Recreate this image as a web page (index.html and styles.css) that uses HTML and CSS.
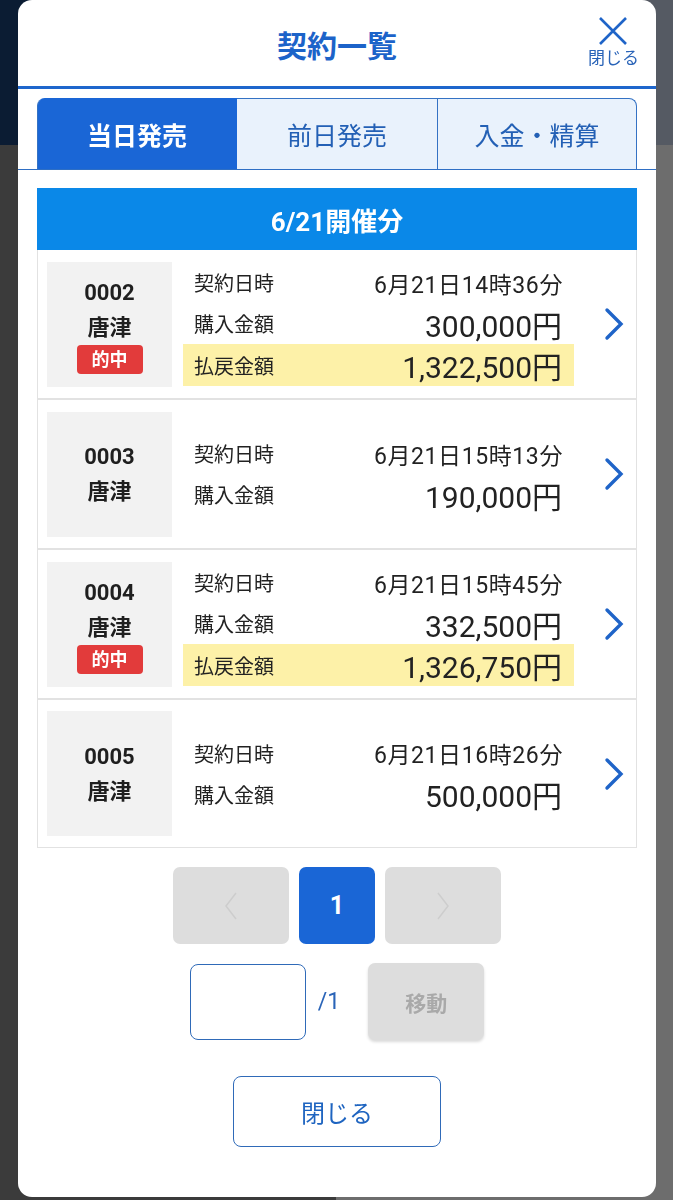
FILE: index.html
```html
<!DOCTYPE html>
<html lang="ja">
    <head>
        <meta charset="UTF-8">
        <meta name="viewport" content="width=device-width, initial-scale=1.0">
        <title>契約一覧</title>
        <link rel="stylesheet" href="styles.css">
    </head>
    <body>
        <div class="page">
            <div class="page-head"></div>
            <div class="page-body"></div>
        </div>

        <div class="modal">
            <header class="modal-head">
                <h1>契約一覧</h1>
                <button class="close-x">
                    <svg width="30" height="28" viewBox="0 0 30 28">
                        <path d="M2 1 L28 27 M28 1 L2 27" stroke="#1f64c8" stroke-width="2.6" fill="none"/>
                    </svg>
                    <span>閉じる</span>
                </button>
            </header>

            <nav class="tabs">
                <ul>
                    <li class="active">当日発売</li>
                    <li>前日発売</li>
                    <li>入金・精算</li>
                </ul>
            </nav>

            <section class="content">
                <h2 class="day">6/21開催分</h2>

                <ul class="contracts">
                    <li class="contract">
                        <div class="race">
                            <b>0002</b>
                            <b>唐津</b>
                            <span class="hit">的中</span>
                        </div>
                        <dl class="info">
                            <div class="row"><dt>契約日時</dt><dd class="date">6月21日14時36分</dd></div>
                            <div class="row"><dt>購入金額</dt><dd class="amount">300,000円</dd></div>
                            <div class="row payout"><dt>払戻金額</dt><dd class="amount">1,322,500円</dd></div>
                        </dl>
                        <svg class="chev" width="22" height="34" viewBox="0 0 22 34">
                            <path d="M4 3 L18 17 L4 31" stroke="#1f64c8" stroke-width="3.4" fill="none" stroke-linecap="round"/>
                        </svg>
                    </li>

                    <li class="contract">
                        <div class="race">
                            <b>0003</b>
                            <b>唐津</b>
                        </div>
                        <dl class="info">
                            <div class="row"><dt>契約日時</dt><dd class="date">6月21日15時13分</dd></div>
                            <div class="row"><dt>購入金額</dt><dd class="amount">190,000円</dd></div>
                        </dl>
                        <svg class="chev" width="22" height="34" viewBox="0 0 22 34">
                            <path d="M4 3 L18 17 L4 31" stroke="#1f64c8" stroke-width="3.4" fill="none" stroke-linecap="round"/>
                        </svg>
                    </li>

                    <li class="contract">
                        <div class="race">
                            <b>0004</b>
                            <b>唐津</b>
                            <span class="hit">的中</span>
                        </div>
                        <dl class="info">
                            <div class="row"><dt>契約日時</dt><dd class="date">6月21日15時45分</dd></div>
                            <div class="row"><dt>購入金額</dt><dd class="amount">332,500円</dd></div>
                            <div class="row payout"><dt>払戻金額</dt><dd class="amount">1,326,750円</dd></div>
                        </dl>
                        <svg class="chev" width="22" height="34" viewBox="0 0 22 34">
                            <path d="M4 3 L18 17 L4 31" stroke="#1f64c8" stroke-width="3.4" fill="none" stroke-linecap="round"/>
                        </svg>
                    </li>

                    <li class="contract">
                        <div class="race">
                            <b>0005</b>
                            <b>唐津</b>
                        </div>
                        <dl class="info">
                            <div class="row"><dt>契約日時</dt><dd class="date">6月21日16時26分</dd></div>
                            <div class="row"><dt>購入金額</dt><dd class="amount">500,000円</dd></div>
                        </dl>
                        <svg class="chev" width="22" height="34" viewBox="0 0 22 34">
                            <path d="M4 3 L18 17 L4 31" stroke="#1f64c8" stroke-width="3.4" fill="none" stroke-linecap="round"/>
                        </svg>
                    </li>
                </ul>

                <div class="pager">
                    <button class="page-btn wide" disabled>
                        <svg width="16" height="30" viewBox="0 0 16 30"><path d="M13 2 L3 15 L13 28" stroke="#cdcdcd" stroke-width="1.5" fill="none"/></svg>
                    </button>
                    <button class="page-btn current">1</button>
                    <button class="page-btn wide" disabled>
                        <svg width="16" height="30" viewBox="0 0 16 30"><path d="M3 2 L13 15 L3 28" stroke="#cdcdcd" stroke-width="1.5" fill="none"/></svg>
                    </button>
                </div>

                <form class="jump">
                    <input type="text">
                    <span class="total">/1</span>
                    <button class="move" disabled>移動</button>
                </form>

                <button class="close-btn">閉じる</button>
            </section>
        </div>
    </body>
</html>
```

FILE: styles.css
```css
:root{
    --blue: #1c63c9;
    --blue-active: #1a66d6;
    --blue-bar: #0a88e8;
    --tab-bg: #e9f2fc;
    --line: #e2e2e2;
    --grey-box: #f2f2f2;
    --btn-grey: #dddddd;
    --text: #222;
}
body{
    margin: 0;
    font-family: Roboto, "Noto Sans CJK JP", sans-serif;
    color: var(--text);
    height: 1200px;
    overflow: hidden;
}
ul, dl, dd, h1, h2{
    margin: 0;
    padding: 0;
    list-style: none;
}
button{
    font-family: inherit;
}

/* page under the overlay */
.page{
    height: 1200px;
    display: flex;
    flex-direction: column;
}
.page-head{
    height: 145px;
    background: linear-gradient(to right, #0b1c33 50%, #555a63 50%);
}
.page-body{
    flex-grow: 1;
    background: linear-gradient(to right, #3b3b3b 50%, #6d6d6d 50%);
}

.modal{
    position: fixed;
    top: 0;
    left: 18px;
    width: 638px;
    height: 1197px;
    background: #fff;
    border-radius: 14px;
    display: flex;
    flex-direction: column;
}

.modal-head{
    height: 86px;
    border-bottom: 3px solid #1e66cc;
    display: grid;
    grid-template-columns: 1fr auto 1fr;
    align-items: center;

    h1{
        grid-column: 2;
        font-size: 30px;
        font-weight: 700;
        color: var(--blue);
        margin-top: 2px;
    }
}
.close-x{
    grid-column: 3;
    justify-self: end;
    margin-right: 17px;
    border: none;
    background: none;
    padding: 0;
    display: flex;
    flex-direction: column;
    align-items: center;
    gap: 2px;
    margin-top: 0;

    svg{
        margin-left: -2px;
    }
    span{
        font-size: 17px;
        color: #2a64b8;
        line-height: 22px;
    }
}

.tabs{
    padding: 9px 19px 0;
    border-bottom: 1px solid #2f6fc4;

    ul{
        display: grid;
        grid-template-columns: 200px 201px 199px;
    }
    li{
        height: 71px;
        display: flex;
        align-items: center;
        justify-content: center;
        font-size: 25px;
        color: #2360b5;
        background: var(--tab-bg);
        border: 1px solid #3472c4;
        border-bottom: none;
        border-left: none;
        box-sizing: border-box;
    }
    li:first-child{
        border-top-left-radius: 8px;
        border-left: 1px solid #3472c4;
    }
    li:last-child{
        border-top-right-radius: 8px;
    }
    .active{
        background: var(--blue-active);
        border-color: var(--blue-active);
        color: #fff;
        font-weight: 700;
    }
}

.content{
    padding: 18px 19px 0;
    display: flex;
    flex-direction: column;
    align-items: center;
}
.day{
    align-self: stretch;
    height: 62px;
    background: var(--blue-bar);
    color: #fff;
    font-size: 26px;
    font-weight: 700;
    display: flex;
    align-items: center;
    justify-content: center;
}

.contracts{
    align-self: stretch;
    border: 1px solid var(--line);
    border-top: none;
}
.contract{
    display: grid;
    grid-template-columns: 125px 391px 1fr;
    gap: 11px;
    align-items: center;
    padding: 11px 0 11px 9px;
    border-bottom: 2px solid var(--line);
    height: 126px;

    &:last-child{
        border-bottom: none;
        height: 125px;
    }
}
.race{
    height: 125px;
    background: var(--grey-box);
    display: flex;
    flex-direction: column;
    align-items: center;
    justify-content: center;
    font-size: 22px;
    line-height: 35px;

    b{
        font-weight: 700;
        color: #1f1f1f;
    }
}
.hit{
    background: #e23b3b;
    color: #fff;
    font-weight: 700;
    font-size: 18px;
    line-height: 29px;
    padding: 0 15px;
    border-radius: 4px;
}
.info{
    display: flex;
    flex-direction: column;
}
.row{
    height: 41px;
    display: flex;
    align-items: center;
    justify-content: space-between;
    padding: 0 12px 0 11px;

    dt{
        font-size: 20px;
    }
    .date{
        font-size: 23px;
        letter-spacing: 0.6px;
        margin-right: -1px;
    }
    .amount{
        font-size: 30px;
    }
    &.payout{
        height: 42px;
        background: #fdf1a8;
    }
}
.chev{
    margin-left: 18px;
}

.pager{
    display: flex;
    gap: 10px;
    margin-top: 19px;
}
.page-btn{
    width: 76px;
    height: 77px;
    border: none;
    border-radius: 7px;
    background: var(--btn-grey);
    display: flex;
    align-items: center;
    justify-content: center;
    padding: 0;

    &.wide{
        width: 116px;
    }
    &.current{
        background: var(--blue-active);
        color: #fff;
        font-size: 25px;
        font-weight: 700;
    }
}

.jump{
    display: flex;
    align-items: center;
    margin-top: 19px;

    input{
        width: 116px;
        height: 76px;
        box-sizing: border-box;
        border: 1.5px solid #2f6ab8;
        border-radius: 8px;
    }
    .total{
        font-size: 23px;
        color: #2a64b8;
        margin: 0 28px 0 12px;
    }
}
.move{
    width: 116px;
    height: 77px;
    border: none;
    border-radius: 7px;
    background: var(--btn-grey);
    color: #a9a9a9;
    font-size: 21px;
    font-weight: 700;
    box-shadow: 0 2px 3px rgba(0, 0, 0, 0.15);
}

.close-btn{
    margin-top: 36px;
    width: 208px;
    height: 71px;
    background: #fff;
    border: 1.5px solid #2f6ab8;
    border-radius: 8px;
    font-size: 24px;
    color: #1e64c0;
}
```
